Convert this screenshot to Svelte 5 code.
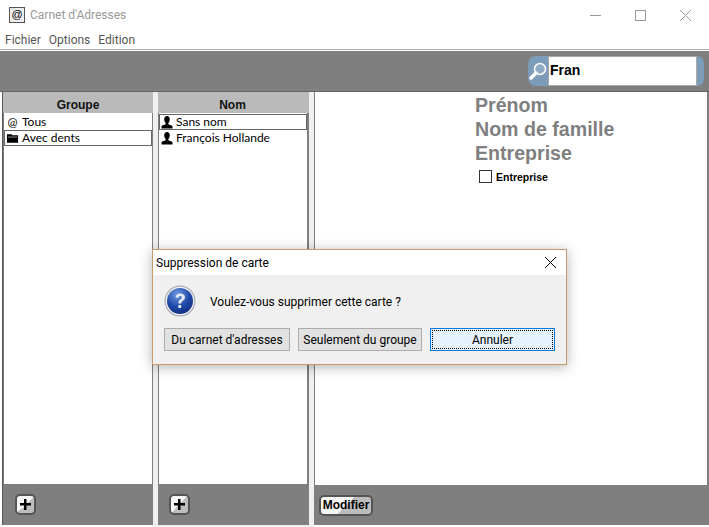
<script lang="ts">
    const groups = [
        { label: "Tous", icon: "at", selected: false },
        { label: "Avec dents", icon: "folder", selected: true },
    ];
    const names = [
        { label: "Sans nom", selected: true },
        { label: "François Hollande", selected: false },
    ];
    const menus = ["Fichier", "Options", "Edition"];
    const fields = ["Prénom", "Nom de famille", "Entreprise"];
</script>

{#snippet person()}
    <svg class="row-icon" viewBox="0 0 12 14" width="12" height="14">
        <path d="M6 1c1.800 0 2.800 1.400 2.800 3.200 0 1.600-.7 2.900-1.400 3.700v1.300c1.400.6 3 1 4.100 2v2.300h-11v-2.300c1.100-1 2.700-1.400 4.100-2v-1.300c-.7-.8-1.400-2.100-1.400-3.700 0-1.800 1-3.200 2.800-3.200z" fill="#000" />
    </svg>
{/snippet}

{#snippet plus()}
    <button class="pixel-btn plus" aria-label="Ajouter">
        <svg viewBox="0 0 11 11" width="11" height="11">
            <path d="M4 0h2.500v4h4.500v2.500h-4.500v4.500h-2.500v-4.500h-4v-2.500h4z" fill="#000" />
        </svg>
    </button>
{/snippet}

<div class="window">
    <header class="titlebar">
        <span class="app-icon">@</span>
        <span class="app-title">Carnet d'Adresses</span>
        <div class="win-controls">
            <svg viewBox="0 0 11 11" width="11" height="11"><path d="M0 5.500h11" stroke="#999" fill="none" /></svg>
            <svg viewBox="0 0 11 11" width="11" height="11"><rect x=".5" y=".5" width="10" height="10" stroke="#999" fill="none" /></svg>
            <svg viewBox="0 0 11 11" width="11" height="11"><path d="M0 0l11 11M11 0l-11 11" stroke="#999" fill="none" /></svg>
        </div>
    </header>

    <nav class="menubar">
        {#each menus as menu}
            <span>{menu}</span>
        {/each}
    </nav>

    <div class="toolbar">
        <div class="search">
            <span class="search-cap">
                <svg viewBox="0 0 20 20" width="20" height="20">
                    <circle cx="12" cy="8" r="5.500" fill="#8fabc4" stroke="#fff" stroke-width="1.500" />
                    <path d="M8 12l-5 5" stroke="#fff" stroke-width="3.500" stroke-linecap="round" />
                </svg>
            </span>
            <span class="search-input">Fran</span>
            <span class="search-end"></span>
        </div>
    </div>

    <main class="columns">
        <section class="column groups">
            <h2>Groupe</h2>
            <ul>
                {#each groups as group}
                    <li class:selected={group.selected}>
                        {#if group.icon === "at"}
                            <span class="row-at">@</span>
                        {:else}
                            <svg class="row-icon" viewBox="0 0 14 14" width="13" height="14">
                                <path d="M1 3h5l1 1h6v8h-12z" fill="#000" />
                                <path d="M2 6h10" stroke="#fff" stroke-width=".6" />
                            </svg>
                        {/if}
                        {group.label}
                    </li>
                {/each}
            </ul>
            <footer>{@render plus()}</footer>
        </section>

        <section class="column names">
            <h2>Nom</h2>
            <ul>
                {#each names as name}
                    <li class:selected={name.selected}>
                        {@render person()}
                        {name.label}
                    </li>
                {/each}
            </ul>
            <footer>{@render plus()}</footer>
        </section>

        <section class="column detail">
            <div class="card">
                {#each fields as field}
                    <div class="field">{field}</div>
                {/each}
                <label class="company">
                    <span class="checkbox"></span>
                    Entreprise
                </label>
            </div>
            <footer><button class="pixel-btn modify">Modifier</button></footer>
        </section>
    </main>

    <div class="dialog">
        <div class="dialog-title">
            <span>Suppression de carte</span>
            <svg viewBox="0 0 11 11" width="11" height="11"><path d="M0 0l11 11M11 0l-11 11" stroke="#000" fill="none" /></svg>
        </div>
        <div class="dialog-body">
            <div class="message">
                <svg viewBox="0 0 32 32" width="32" height="32">
                    <defs>
                        <radialGradient id="q" cx="40%" cy="25%" r="85%">
                            <stop offset="0" stop-color="#6f9be0" />
                            <stop offset=".55" stop-color="#1f4aa8" />
                            <stop offset="1" stop-color="#0e2a78" />
                        </radialGradient>
                    </defs>
                    <circle cx="16" cy="16" r="15.500" fill="#a9adb5" />
                    <circle cx="16" cy="16" r="14.300" fill="#f2f3f6" />
                    <circle cx="16" cy="16" r="13" fill="url(#q)" />
                    <path d="M11.500 12.500c.4-2.700 2.300-4 4.800-4 2.700 0 4.700 1.500 4.700 3.800 0 3.300-3.800 3.300-3.800 6.200h-2.900c0-4 3.600-4 3.600-6 0-1-.7-1.600-1.700-1.600-1.100 0-1.800.7-2 1.900z" fill="#e8edf5" />
                    <rect x="14.300" y="20" width="2.900" height="3" rx=".8" fill="#e8edf5" />
                </svg>
                <span class="question">Voulez-vous supprimer cette carte ?</span>
            </div>
            <div class="actions">
                <button class="win-btn first">Du carnet d'adresses</button>
                <button class="win-btn second">Seulement du groupe</button>
                <button class="win-btn focused"><span>Annuler</span></button>
            </div>
        </div>
    </div>
</div>

<style>
    :global(body) {
        margin: 0;
        background: #fff;
    }

    .window {
        position: relative;
        width: 709px;
        height: 527px;
        overflow: hidden;
        background: #fff;
        font-family: "Liberation Sans", sans-serif;
        display: flex;
        flex-direction: column;
    }

    /* ---- Title bar ---- */
    .titlebar {
        height: 30px;
        display: flex;
        align-items: center;
        padding-left: 9px;
        font-family: Roboto, sans-serif;
        font-size: 12px;
        color: #999;
    }

    .app-icon {
        width: 14px;
        height: 14px;
        margin-right: 5px;
        border: 1px solid #555;
        background: #eee;
        color: #000;
        font: 11px/13px "Liberation Sans", sans-serif;
        text-align: center;
    }

    .win-controls {
        margin-left: auto;
        display: flex;
        gap: 34px;
        padding-right: 18px;
    }

    .menubar {
        height: 19px;
        display: flex;
        align-items: center;
        gap: 8px;
        padding-left: 5px;
        font-family: Roboto, sans-serif;
        font-size: 12px;
        color: #555;
        border-bottom: 1px solid #a8a8a8;
    }

    .toolbar {
        height: 40px;
        margin-top: 1px;
        background: #7f7f7f;
        border-bottom: 1px solid #666;
        display: flex;
        align-items: center;
        justify-content: flex-end;
        padding-right: 5px;
    }

    .search {
        width: 176px;
        height: 30px;
        display: flex;
    }

    .search-cap {
        width: 20px;
        background: #7d9cb9;
        border-radius: 8px 0 0 8px;
        display: flex;
        align-items: center;
        justify-content: center;
    }

    .search-input {
        flex: 1;
        background: #fff;
        border: 1px solid #a8a8a8;
        padding-left: 1px;
        font-size: 14px;
        font-weight: 700;
        line-height: 26px;
        color: #000;
    }

    .search-end {
        width: 7px;
        background: #7d9cb9;
        border-radius: 0 8px 8px 0;
    }

    /* ---- Columns ---- */
    .columns {
        flex: 1;
        display: flex;
        padding: 0 0 2px 2px;
        background: linear-gradient(#f0f0f0, #f0f0f0) no-repeat 153px 0 / 161px 100%;
    }

    .column {
        display: flex;
        flex-direction: column;
    }

    .groups {
        width: 150px;
        margin-right: 5px;
        border-left: 1px solid #555;
    }

    .names {
        width: 151px;
        margin-right: 5px;
    }

    .detail {
        flex: 1;
        background: #fff;
    }

    h2 {
        margin: 0;
        height: 21px;
        background: #bababa;
        font-size: 12px;
        line-height: 26px;
        text-align: center;
        font-weight: 700;
        color: #111;
    }

    .names h2 {
        padding-right: 2px;
    }

    ul {
        flex: 1;
        list-style: none;
        margin: 0;
        padding: 1px 0 0;
        background: #fff;
        border-left: 1px solid #7f7f7f;
        border-right: 1px solid #7f7f7f;
    }

    .names ul {
        border-right-width: 2px;
    }

    li {
        height: 16px;
        display: flex;
        align-items: center;
        gap: 3px;
        font-family: Lato, sans-serif;
        font-size: 12px;
        line-height: 14px;
        color: #000;
        box-sizing: border-box;
        padding: 0 0 1px 2px;
    }

    li.selected {
        outline: 1px solid #666;
        outline-offset: -1px;
    }

    .row-at {
        width: 13px;
        font-size: 12px;
        text-align: center;
    }

    .row-icon {
        flex-shrink: 0;
    }

    footer {
        height: 41px;
        background: #7f7f7f;
        display: flex;
        align-items: center;
        padding-left: 12px;
    }

    .names footer {
        padding-left: 11px;
    }

    .card {
        flex: 1;
        padding-left: 160px;
        padding-top: 1px;
        border-left: 1px solid #7f7f7f;
        border-right: 2px solid #7f7f7f;
    }

    .detail footer {
        height: 40px;
        padding-left: 5px;
    }

    .pixel-btn {
        border: 2px solid #555;
        border-radius: 5px;
        background: linear-gradient(135deg, #f5f5f5 50%, #bdbdbd 50%);
        padding: 0;
        font-family: "Liberation Sans", sans-serif;
        font-weight: 700;
        color: #000;
    }

    .plus {
        width: 21px;
        height: 21px;
        display: flex;
        align-items: center;
        justify-content: center;
    }

    .modify {
        width: 54px;
        height: 21px;
        font-size: 12px;
    }

    /* ---- Detail card ---- */
    .field {
        height: 24px;
        font-size: 19.6px;
        line-height: 24px;
        font-weight: 700;
        color: #7f7f7f;
    }

    .company {
        display: flex;
        align-items: center;
        gap: 4px;
        margin: 5px 0 0 4px;
        font-size: 10.5px;
        font-weight: 700;
        color: #000;
    }

    .checkbox {
        width: 11px;
        height: 11px;
        border: 1px solid #333;
    }

    /* ---- Dialog ---- */
    .dialog {
        position: absolute;
        left: 152px;
        top: 249px;
        width: 415px;
        height: 116px;
        box-sizing: border-box;
        border: 1px solid #c99a6b;
        background: #f0f0f0;
        box-shadow: 0 2px 12px rgba(0, 0, 0, 0.3);
        font-family: Roboto, sans-serif;
        font-size: 12px;
        color: #000;
    }

    .dialog-title {
        height: 25px;
        background: #fff;
        display: flex;
        align-items: center;
        justify-content: space-between;
        padding: 0 10px 0 3px;
    }

    .dialog-body {
        padding: 10px 11px;
    }

    .message {
        display: flex;
        align-items: center;
        gap: 14px;
        padding-bottom: 11px;
    }

    .question {
        padding-top: 1px;
    }

    .actions {
        display: flex;
    }

    .win-btn {
        height: 23px;
        background: #e1e1e1;
        border: 1px solid #adadad;
        font-family: Roboto, sans-serif;
        font-size: 12px;
        color: #000;
        padding: 0;
        white-space: nowrap;
    }

    .first {
        width: 126px;
        margin-right: 8px;
    }

    .second {
        width: 124px;
        margin-right: 8px;
    }

    .focused {
        width: 125px;
        background: #e5f1fb;
        border: 1px solid #0078d7;
        padding: 1px;
    }

    .focused span {
        display: block;
        height: 100%;
        line-height: 19px;
        box-sizing: border-box;
        border: 1px dotted #000;
    }
</style>
